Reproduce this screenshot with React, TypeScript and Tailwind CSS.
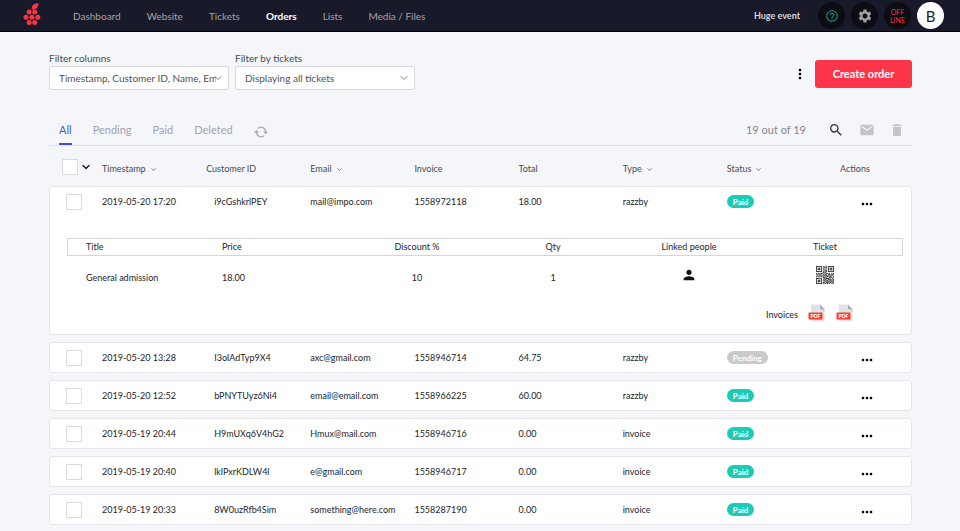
import type { ReactNode } from "react";
import {
  MdDelete,
  MdEmail,
  MdHelpOutline,
  MdMoreHoriz,
  MdMoreVert,
  MdPerson,
  MdSearch,
  MdSettings,
} from "react-icons/md";
import { ChevronDown } from "lucide-react";

type Order = {
  time: string;
  customer: string;
  email: string;
  invoice: string;
  total: string;
  type: string;
  status: "Paid" | "Pending";
};

const navItems = ["Dashboard", "Website", "Tickets", "Orders", "Lists", "Media / Files"];

const tabs = ["All", "Pending", "Paid", "Deleted"];

const columns = [
  { label: "Timestamp", sortable: true },
  { label: "Customer ID", sortable: false },
  { label: "Email", sortable: true },
  { label: "Invoice", sortable: false },
  { label: "Total", sortable: false },
  { label: "Type", sortable: true },
  { label: "Status", sortable: true },
];

const orders: Order[] = [
  { time: "2019-05-20 17:20", customer: "i9cGshkrlPEY", email: "mail@impo.com", invoice: "1558972118", total: "18.00", type: "razzby", status: "Paid" },
  { time: "2019-05-20 13:28", customer: "I3oIAdTyp9X4", email: "axc@gmail.com", invoice: "1558946714", total: "64.75", type: "razzby", status: "Pending" },
  { time: "2019-05-20 12:52", customer: "bPNYTUyz6Ni4", email: "email@email.com", invoice: "1558966225", total: "60.00", type: "razzby", status: "Paid" },
  { time: "2019-05-19 20:44", customer: "H9mUXq6V4hG2", email: "Hmux@mail.com", invoice: "1558946716", total: "0.00", type: "invoice", status: "Paid" },
  { time: "2019-05-19 20:40", customer: "lklPxrKDLW4l", email: "e@gmail.com", invoice: "1558946717", total: "0.00", type: "invoice", status: "Paid" },
  { time: "2019-05-19 20:33", customer: "8W0uzRfb4Sim", email: "something@here.com", invoice: "1558287190", total: "0.00", type: "invoice", status: "Paid" },
];

const rowGrid = "grid grid-cols-[52px_repeat(7,minmax(0,1fr))_80px] items-center";
const detailGrid = "grid grid-cols-6 items-center px-[9px]";

const Logo = () => (
  <svg viewBox="0 0 18 22" className="mb-1 h-[22px] w-[18px]" fill="#fb3449" aria-hidden="true">
    <path d="M8.800 6.600C8 2.800 10.800.4 15.300 0c.3 3.900-1.900 6.900-6.500 6.600z" />
    <circle cx="6.200" cy="9" r="2.500" />
    <circle cx="11.700" cy="9" r="2.500" />
    <circle cx="3" cy="14.200" r="2.500" />
    <circle cx="8.900" cy="14.200" r="2.500" />
    <circle cx="14.800" cy="14.200" r="2.500" />
    <circle cx="6.200" cy="19.400" r="2.500" />
    <circle cx="11.700" cy="19.400" r="2.500" />
  </svg>
);

const RefreshIcon = () => (
  <svg viewBox="0 0 14 14" className="size-[14px]" fill="none" stroke="#a9acb3" strokeWidth="1.200" aria-hidden="true">
    <path d="M3.800 3.500A4.600 4.600 0 0 1 11.600 7v1.200M10.200 10.500A4.600 4.600 0 0 1 2.400 7V5.800" />
    <path d="M.5 7.600 2.400 5.700l1.900 1.900M9.700 6.400l1.900 1.900 1.900-1.900" />
  </svg>
);

// 21x21 modules, finder squares in three corners
const qrRows = [
  "111111101010101111111",
  "100000100110101000001",
  "101110101001001011101",
  "101110100101101011101",
  "101110101100001011101",
  "100000100011101000001",
  "111111101010101111111",
  "000000001101000000000",
  "101101110010110100101",
  "010110001101001110110",
  "110011101011100101011",
  "001010010110111010100",
  "101101101001010111001",
  "000000001110100101101",
  "111111100101111010010",
  "100000101011001110101",
  "101110100110110011011",
  "101110101101011101100",
  "101110100011100110111",
  "100000101100111011010",
  "111111101011010100101",
];

const QrCode = () => (
  <svg viewBox="0 0 21 21" className="size-[18px]" fill="#000" aria-hidden="true">
    {qrRows.map((row, y) =>
      row.split("").map((cell, x) =>
        cell === "1" ? <rect key={`${x}-${y}`} x={x} y={y} width="1" height="1" /> : null
      )
    )}
  </svg>
);

const PdfIcon = () => (
  <svg viewBox="0 0 18 18" className="size-[18px]" aria-hidden="true">
    <path d="M3 .5h9L16.500 5v12.500H3z" fill="#dfe2e8" />
    <path d="M12 .5 16.500 5H12z" fill="#a3aebf" />
    <path d="M12.500 5h4v3.500z" fill="#c9ced8" />
    <rect x=".5" y="8.500" width="14" height="7" rx=".6" fill="#f9402d" />
    <text x="7.500" y="13.900" textAnchor="middle" fontSize="5" fontWeight="900" fill="#fff">
      PDF
    </text>
  </svg>
);

const Checkbox = ({ label }: { label: string }) => (
  <input
    type="checkbox"
    aria-label={label}
    className="block size-4 shrink-0 appearance-none border border-[#d9dbe0] bg-white"
  />
);

const StatusBadge = ({ status }: { status: Order["status"] }) => (
  <span
    className={`flex h-[13px] w-fit items-center rounded-full px-[6px] text-[8px] font-bold text-white ${
      status === "Paid" ? "bg-[#1bcbb3]" : "bg-[#c9cacc]"
    }`}
  >
    {status}
  </span>
);

const Filter = ({ id, label, value }: { id: string; label: string; value: string }) => (
  <div className="w-[180px]">
    <label htmlFor={id} className="block text-[10px] leading-4 text-[#484b53]">
      {label}
    </label>
    <div className="relative">
      <select
        id={id}
        className="block h-6 w-full appearance-none rounded-xs border border-[#d5d8dc] bg-white pr-3 pl-[9px] text-[10px] text-[#50535b]"
      >
        <option>{value}</option>
      </select>
      <ChevronDown className="pointer-events-none absolute top-[6px] right-[5px] size-3 text-[#7d8492]" />
    </div>
  </div>
);

const RoundButton = ({ label, className, children }: { label: string; className: string; children: ReactNode }) => (
  <button
    type="button"
    aria-label={label}
    className={`flex size-[27px] items-center justify-center rounded-full ${className}`}
  >
    {children}
  </button>
);

const TopBar = () => (
  <header className="flex h-8 items-center border-b border-black bg-[#191a29] pr-4 pl-[23px]">
    <Logo />
    <nav className="ml-8 flex gap-[26px] pt-px text-[10px] text-[#a3a4ab]">
      {navItems.map((item) => (
        <a key={item} href="#" className={item === "Orders" ? "font-bold text-white" : ""}>
          {item}
        </a>
      ))}
    </nav>
    <div className="ml-auto flex items-center gap-[6px]">
      <span className="mr-3 text-[9px] font-bold text-[#d8d8dc]">Huge event</span>
      <RoundButton label="Help" className="bg-[#0c0c12] text-[#16907c]">
        <MdHelpOutline className="size-[14px]" />
      </RoundButton>
      <RoundButton label="Settings" className="bg-[#0c0c12] text-[#9b9ca1]">
        <MdSettings className="size-4" />
      </RoundButton>
      <RoundButton label="Offline" className="bg-[#0c0c12] text-[7px] leading-[8px] text-[#f03a4c]">
        <span>
          OFF
          <br />
          LINE
        </span>
      </RoundButton>
      <RoundButton label="Account" className="bg-white text-[15px] text-[#222]">
        B
      </RoundButton>
    </div>
  </header>
);

const OrderDetails = () => (
  <div className="pt-[22px] pr-2 pb-3 pl-[17px]">
    <table className="block">
      <thead className="block border border-[#d5d6da]">
        <tr className={`${detailGrid} h-4`}>
          <th className="pl-[9px] text-left font-normal">Title</th>
          <th className="pl-[9px] text-left font-normal">Price</th>
          <th className="font-normal">Discount %</th>
          <th className="font-normal">Qty</th>
          <th className="font-normal">Linked people</th>
          <th className="font-normal">Ticket</th>
        </tr>
      </thead>
      <tbody className="block border-x border-transparent">
        <tr className={`${detailGrid} h-[38px]`}>
          <td className="pt-[6px] pl-[9px]">General admission</td>
          <td className="pt-[6px] pl-[9px]">18.00</td>
          <td className="pt-[6px] text-center">10</td>
          <td className="pt-[6px] text-center">1</td>
          <td className="flex justify-center">
            <MdPerson className="size-4 text-[#111]" />
          </td>
          <td className="flex justify-center">
            <QrCode />
          </td>
        </tr>
      </tbody>
    </table>
    <div className="mt-[10px] flex items-center justify-end gap-[10px] pr-[49px]">
      <span className="pt-1">Invoices</span>
      <a href="#" aria-label="Invoice PDF">
        <PdfIcon />
      </a>
      <a href="#" aria-label="Receipt PDF">
        <PdfIcon />
      </a>
    </div>
  </div>
);

const OrderCard = ({ order, open }: { order: Order; open: boolean }) => (
  <tbody className="block rounded-[3px] border border-[#e4e6ea] bg-white">
    <tr className={`${rowGrid} h-[29px]`}>
      <td className="pl-4">
        <Checkbox label={`Select order ${order.invoice}`} />
      </td>
      <td>{order.time}</td>
      <td className="pl-2">{order.customer}</td>
      <td>{order.email}</td>
      <td>{order.invoice}</td>
      <td>{order.total}</td>
      <td>{order.type}</td>
      <td>
        <StatusBadge status={order.status} />
      </td>
      <td className="pt-1 pl-[28px]">
        <button type="button" aria-label="Order actions" className="block text-black">
          <MdMoreHoriz className="size-4" />
        </button>
      </td>
    </tr>
    {open && (
      <tr className="block">
        <td className="block">
          <OrderDetails />
        </td>
      </tr>
    )}
  </tbody>
);

const App = () => (
  <div className="min-h-screen bg-[#f5f6f9] font-['Lato',sans-serif] text-[9px] leading-[14px] text-[#22242c]">
    <TopBar />
    <main className="pt-[18px] pr-12 pl-[49px]">
      <div className="flex items-end gap-[6px]">
        <Filter id="columns" label="Filter columns" value="Timestamp, Customer ID, Name, Em" />
        <Filter id="tickets" label="Filter by tickets" value="Displaying all tickets" />
        <button type="button" aria-label="More options" className="mr-px mb-2 ml-auto text-black">
          <MdMoreVert className="size-4" />
        </button>
        <button
          type="button"
          className="mb-[2px] h-7 w-[97px] rounded-[3px] bg-[#fe3448] text-[11px] font-bold text-white"
        >
          Create order
        </button>
      </div>

      <div className="mt-[25px] flex h-[31px] items-stretch border-b border-[#e1e3e8] pr-[7px] pl-[10px]">
        <div className="flex gap-[21px] text-[11px] text-[#a0a4af]">
          {tabs.map((tab) => (
            <button
              key={tab}
              type="button"
              className={`border-b-2 pt-px ${
                tab === "All" ? "border-[#3d4fdc] text-[#3d5bd0]" : "border-transparent"
              }`}
            >
              {tab}
            </button>
          ))}
          <button type="button" aria-label="Refresh" className="pt-1">
            <RefreshIcon />
          </button>
        </div>
        <div className="ml-auto flex items-center text-[#c5c6c9]">
          <span className="mr-[22px] text-[11px] text-[#85888f]">19 out of 19</span>
          <button type="button" aria-label="Search" className="mr-[15px] text-[#33353b]">
            <MdSearch className="size-4" />
          </button>
          <button type="button" aria-label="Send email" className="mr-[14px]">
            <MdEmail className="size-4" />
          </button>
          <button type="button" aria-label="Delete">
            <MdDelete className="size-4" />
          </button>
        </div>
      </div>

      <table className="flex flex-col gap-[7px]">
        <thead className="block border-x border-transparent">
          <tr className={`${rowGrid} h-[33px] pt-3 text-[#484b53]`}>
            <th className="-mt-1 flex items-center gap-[2px] pl-3 font-normal">
              <Checkbox label="Select all orders" />
              <ChevronDown className="size-3 shrink-0 text-[#22242c]" strokeWidth={3} />
            </th>
            {columns.map((column) => (
              <th key={column.label} className="text-left font-normal">
                {column.label}
                {column.sortable && <ChevronDown className="ml-1 inline size-[7px] text-[#6b6e76]" strokeWidth={3} />}
              </th>
            ))}
            <th className="pl-[9px] text-left font-normal">Actions</th>
          </tr>
        </thead>
        {orders.map((order, index) => (
          <OrderCard key={order.invoice} order={order} open={index === 0} />
        ))}
      </table>
    </main>
  </div>
);

export default App;
